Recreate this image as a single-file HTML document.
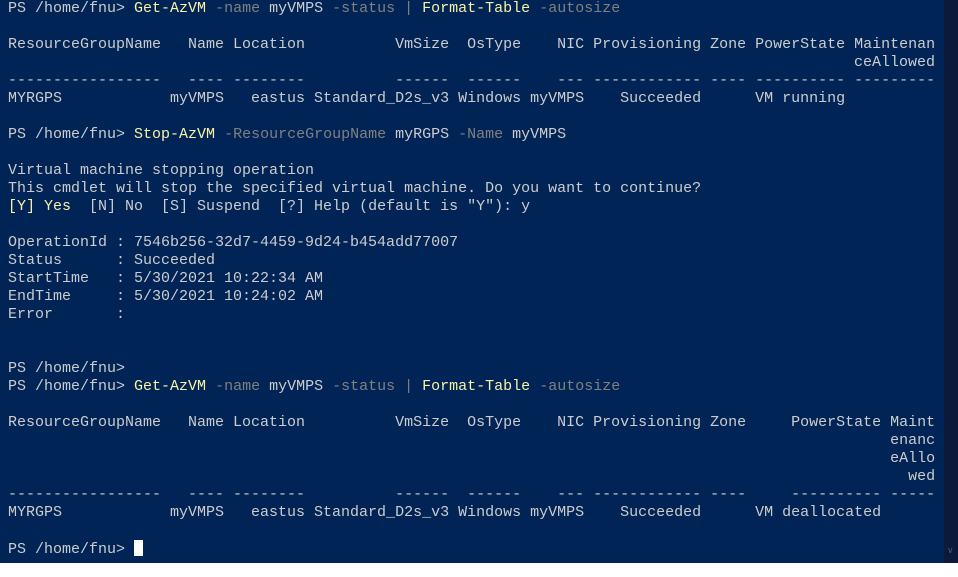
<!DOCTYPE html>
<html><head><style>
html,body{margin:0;padding:0;}
body{width:958px;height:577px;background:#fff;position:relative;overflow:hidden;}
#term{position:absolute;left:0;top:0;width:944px;height:563px;background:#012456;}
#sb{position:absolute;left:944px;top:0;width:14px;height:563px;background:#0b1a3a;}
#sb span{position:absolute;left:3px;top:545px;color:#4a5670;font:9px "Liberation Sans",sans-serif;}
pre{position:absolute;left:8px;top:0px;margin:0;font:15px/18px "Liberation Mono",monospace;color:#cccccc;white-space:pre;}
.y{color:#f9f1a5;}
.g{color:#808080;}
.c{display:inline-block;width:9px;height:16px;background:#ffffff;vertical-align:-3px;}
.ca{position:absolute;left:846px;top:54px;}
</style></head><body>
<div id="term"><pre>PS /home/fnu&gt; <span class="y">Get-AzVM</span> <span class="g">-name</span> myVMPS <span class="g">-status</span> <span class="g">|</span> <span class="y">Format-Table</span> <span class="g">-autosize</span>

ResourceGroupName   Name Location          VmSize  OsType    NIC Provisioning Zone PowerState Maintenan
<span class="ca">ceAllowed</span>
-----------------   ---- --------          ------  ------    --- ------------ ---- ---------- ---------
MYRGPS            myVMPS   eastus Standard_D2s_v3 Windows myVMPS    Succeeded      VM running

PS /home/fnu&gt; <span class="y">Stop-AzVM</span> <span class="g">-ResourceGroupName</span> myRGPS <span class="g">-Name</span> myVMPS

Virtual machine stopping operation
This cmdlet will stop the specified virtual machine. Do you want to continue?
<span class="y">[Y] Yes</span>  [N] No  [S] Suspend  [?] Help (default is "Y"): y

OperationId : 7546b256-32d7-4459-9d24-b454add77007
Status      : Succeeded
StartTime   : 5/30/2021 10:22:34 AM
EndTime     : 5/30/2021 10:24:02 AM
Error       :


PS /home/fnu&gt;
PS /home/fnu&gt; <span class="y">Get-AzVM</span> <span class="g">-name</span> myVMPS <span class="g">-status</span> <span class="g">|</span> <span class="y">Format-Table</span> <span class="g">-autosize</span>

ResourceGroupName   Name Location          VmSize  OsType    NIC Provisioning Zone     PowerState Maint
                                                                                                  enanc
                                                                                                  eAllo
                                                                                                    wed
-----------------   ---- --------          ------  ------    --- ------------ ----     ---------- -----
MYRGPS            myVMPS   eastus Standard_D2s_v3 Windows myVMPS    Succeeded      VM deallocated

PS /home/fnu&gt; <span class="c"></span></pre></div>
<div id="sb"><span>&#8744;</span></div>
</body></html>
